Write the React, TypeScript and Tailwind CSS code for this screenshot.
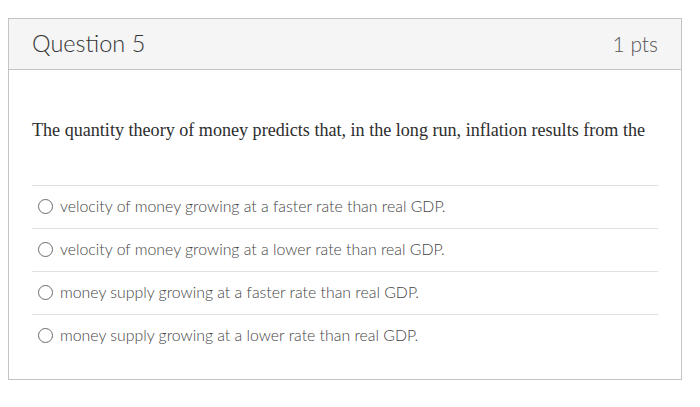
export default function App() {
  const opts = [
    "velocity of money growing at a faster rate than real GDP.",
    "velocity of money growing at a lower rate than real GDP.",
    "money supply growing at a faster rate than real GDP.",
    "money supply growing at a lower rate than real GDP.",
  ];
  return (
    <div className="w-[700px] h-[407px] bg-white pt-[18px] pl-[8px]">
      <div className="w-[674px] border border-[#c4c4c4] bg-white">
        <div className="h-[51px] bg-[#f5f5f5] border-b border-[#c4c4c4] px-[23px] flex items-center justify-between font-['Lato',sans-serif] font-light">
          <span className="text-[23.5px] text-[#333]">Question 5</span>
          <span className="text-[21px] text-[#555]">1 pts</span>
        </div>
        <div className="px-[23px] pt-[47px] pb-[22px]">
          <p className="font-['Liberation_Serif',serif] text-[18.1px] leading-[27px] text-[#2d2d2d]">
            The quantity theory of money predicts that, in the long run, inflation results from the
          </p>
          <div className="mt-[41px]">
            {opts.map((o) => (
              <div key={o} className="h-[43px] pb-[2px] border-t border-[#e0e0e0] flex items-center font-['Lato',sans-serif] font-light">
                <span className="ml-[6px] w-[15px] h-[15px] rounded-full border-[1.5px] border-[#6b6b6b] shrink-0" />
                <span className="ml-[7px] text-[15.85px] text-[#444]">{o}</span>
              </div>
            ))}
          </div>
        </div>
      </div>
    </div>
  );
}
